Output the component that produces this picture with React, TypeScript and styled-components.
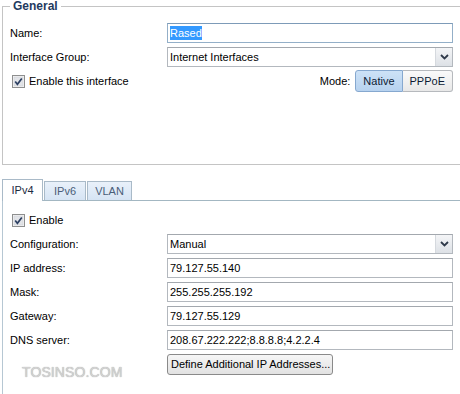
import React from "react";
import styled, { createGlobalStyle } from "styled-components";

const GlobalStyle = createGlobalStyle`
  html, body {
    margin: 0;
    padding: 0;
    background: #ffffff;
  }
  body {
    font-family: "Liberation Sans", Arial, sans-serif;
    font-size: 11px;
    color: #000;
    width: 460px;
    height: 394px;
    overflow: hidden;
  }
`;

const Page = styled.div`
  width: 460px;
  height: 394px;
  overflow: hidden;
`;

const Fieldset = styled.fieldset`
  margin: 0 0 0 2px;
  padding: 11px 7px 0 7px;
  border: 1px solid #c4c4c4;
  border-right: none;
  min-width: 0;
`;

const Legend = styled.legend`
  padding: 0 3px;
  font-size: 12px;
  line-height: 12px;
  font-weight: bold;
  color: #1f3a5e;
`;

const FormGrid = styled.div<{ $height?: number }>`
  display: grid;
  grid-template-columns: 157px 1fr;
  grid-auto-rows: 20px;
  row-gap: 4px;
  align-items: center;
  ${(p) => (p.$height ? `height: ${p.$height}px;` : "")}
  align-content: start;
`;

const Label = styled.div`
  line-height: 20px;
  white-space: nowrap;
`;

const TextBox = styled.div<{ $focus?: boolean }>`
  height: 20px;
  box-sizing: border-box;
  border: 1px solid ${(p) => (p.$focus ? "#93afc8" : "#b3b8be")};
  border-top-color: ${(p) => (p.$focus ? "#7d9bb8" : "#a3a8ae")};
  background: #fff;
  padding: 0 2px;
  line-height: 18px;
  white-space: nowrap;
  overflow: hidden;
`;

const Selected = styled.span`
  background: #3399ff;
  color: #fff;
  padding: 1px 0;
`;

const SelectBox = styled.div`
  height: 20px;
  box-sizing: border-box;
  border: 1px solid #b3b8be;
  border-top-color: #a3a8ae;
  background: #fff;
  display: flex;
  align-items: stretch;
`;

const SelectText = styled.div`
  flex: 1;
  padding: 0 2px;
  line-height: 18px;
`;

const Arrow = styled.div`
  width: 16px;
  border-left: 1px solid #d5d9de;
  background: linear-gradient(#f4f5f7, #dde1e6);
  display: flex;
  align-items: center;
  justify-content: center;
`;

const FullRow = styled.div`
  grid-column: 1 / -1;
  display: flex;
  align-items: center;
  height: 20px;
`;

const CheckLabel = styled.label`
  display: flex;
  align-items: center;
  gap: 4px;
  padding-left: 2px;
`;

const Spacer = styled.div`
  flex: 1;
`;

const ModeLabel = styled.span`
  margin-right: 5px;
`;

const Segment = styled.div`
  display: flex;
  height: 22px;
`;

const SegButton = styled.div<{ $active?: boolean; $first?: boolean }>`
  height: 22px;
  box-sizing: border-box;
  padding: 0 7px;
  line-height: 20px;
  border: 1px solid ${(p) => (p.$active ? "#86a8cf" : "#b6b9bd")};
  ${(p) => (p.$first ? "border-radius: 3px 0 0 3px;" : "border-radius: 0 3px 3px 0; border-left: none;")}
  background: ${(p) =>
    p.$active
      ? "linear-gradient(#cde2f7, #b7d2ef)"
      : "linear-gradient(#fafafa, #e8e8e8)"};
  color: #0c1a33;
`;

const TabBar = styled.div`
  display: flex;
  align-items: flex-end;
  gap: 1px;
  height: 21px;
  margin: 14px 0 0 2px;
  border-bottom: 1px solid #a3b7c2;
`;

const Tab = styled.div<{ $active?: boolean; $w: number }>`
  box-sizing: border-box;
  width: ${(p) => p.$w}px;
  text-align: center;
  border: 1px solid #a9bac8;
  border-bottom: none;
  margin-bottom: ${(p) => (p.$active ? "-1px" : "0")};
  height: ${(p) => (p.$active ? "22px" : "19px")};
  line-height: ${(p) => (p.$active ? "21px" : "18px")};
  background: ${(p) => (p.$active ? "#ffffff" : "linear-gradient(#e9f1fa, #d6e4f4)")};
  color: ${(p) => (p.$active ? "#1b2a40" : "#4a5d78")};
`;

const Panel = styled.div`
  margin-left: 2px;
  border-left: 1px solid #b6c7d3;
  padding: 9px 7px 0 7px;
  height: 200px;
`;

const PushButton = styled.div`
  justify-self: start;
  height: 21px;
  box-sizing: border-box;
  padding: 0 2px 0 3px;
  line-height: 19px;
  border: 1px solid #8a8a8a;
  border-radius: 3px;
  background: linear-gradient(#f6f6f6, #e2e2e2);
  white-space: nowrap;
`;

const Watermark = styled.div`
  align-self: start;
  padding: 10px 0 0 12px;
  font-size: 14px;
  line-height: 16px;
  color: #d2d2d2;
  letter-spacing: 0.1px;
  text-shadow: 0 0 1px #9a9a9a;
  white-space: nowrap;
`;

function CheckBox() {
  return (
    <svg width="13" height="13" viewBox="0 0 13 13">
      <rect x="0.5" y="0.5" width="12" height="12" fill="#f4f4f4" stroke="#8e8f8f" />
      <rect x="2" y="2" width="9" height="9" fill="#e2e4e8" stroke="#c9ccd1" strokeWidth="0.5" />
      <path d="M3.2 6.4 L5.4 9.3 L9.8 3.4" fill="none" stroke="#2d4063" strokeWidth="1.7" />
    </svg>
  );
}

function Chevron() {
  return (
    <svg width="9" height="6" viewBox="0 0 9 6">
      <path d="M1 1 L4.5 4.5 L8 1" fill="none" stroke="#2f3a4a" strokeWidth="1.8" />
    </svg>
  );
}

function Select({ value }: { value: string }) {
  return (
    <SelectBox>
      <SelectText>{value}</SelectText>
      <Arrow>
        <Chevron />
      </Arrow>
    </SelectBox>
  );
}

const fields = [
  { label: "IP address:", value: "79.127.55.140" },
  { label: "Mask:", value: "255.255.255.192" },
  { label: "Gateway:", value: "79.127.55.129" },
  { label: "DNS server:", value: "208.67.222.222;8.8.8.8;4.2.2.4" },
];

export default function App() {
  return (
    <Page>
      <GlobalStyle />
      <Fieldset>
        <Legend>General</Legend>
        <FormGrid $height={141}>
          <Label>Name:</Label>
          <TextBox $focus>
            <Selected>Rased</Selected>
          </TextBox>
          <Label>Interface Group:</Label>
          <Select value="Internet Interfaces" />
          <FullRow>
            <CheckLabel>
              <CheckBox />
              Enable this interface
            </CheckLabel>
            <Spacer />
            <ModeLabel>Mode:</ModeLabel>
            <Segment>
              <SegButton $active $first>Native</SegButton>
              <SegButton>PPPoE</SegButton>
            </Segment>
          </FullRow>
        </FormGrid>
      </Fieldset>

      <TabBar>
        <Tab $active $w={41}>IPv4</Tab>
        <Tab $w={42}>IPv6</Tab>
        <Tab $w={45}>VLAN</Tab>
      </TabBar>
      <Panel>
        <FormGrid>
          <FullRow>
            <CheckLabel>
              <CheckBox />
              Enable
            </CheckLabel>
          </FullRow>
          <Label>Configuration:</Label>
          <Select value="Manual" />
          {fields.map((f) => (
            <React.Fragment key={f.label}>
              <Label>{f.label}</Label>
              <TextBox>{f.value}</TextBox>
            </React.Fragment>
          ))}
          <Watermark>TOSINSO.COM</Watermark>
          <PushButton>Define Additional IP Addresses...</PushButton>
        </FormGrid>
      </Panel>
    </Page>
  );
}
